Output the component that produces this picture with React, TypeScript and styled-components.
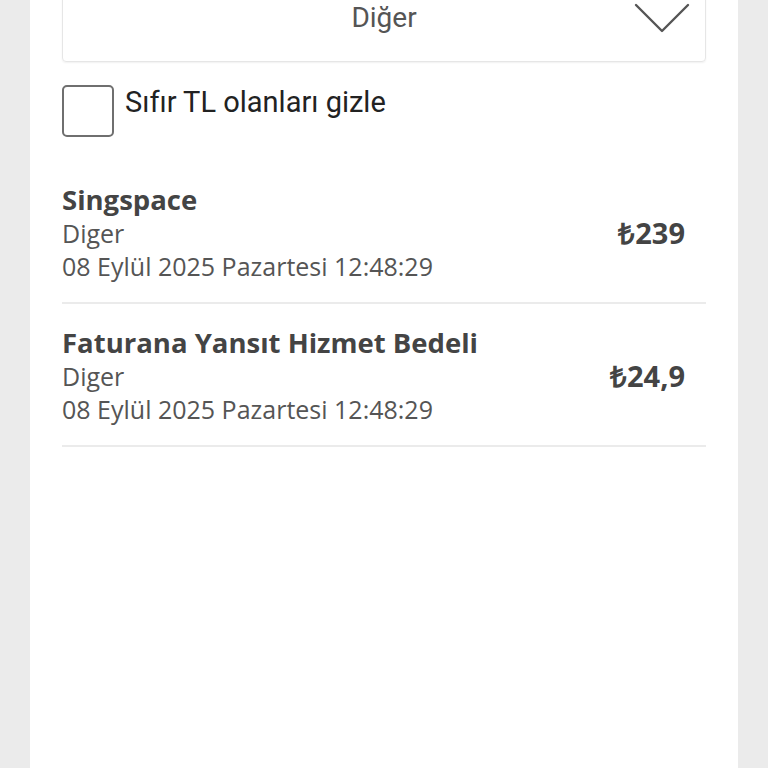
import React, { useState } from 'react';
import styled, { createGlobalStyle } from 'styled-components';

const GlobalStyle = createGlobalStyle`
  html, body {
    margin: 0;
    padding: 0;
    background: #ebebeb;
    overflow: hidden;
  }
  * { box-sizing: border-box; }
`;

type Transaction = {
  id: string;
  title: string;
  category: string;
  date: string;
  amount: string;
};

const transactions: Transaction[] = [
  {
    id: '1',
    title: 'Singspace',
    category: 'Diger',
    date: '08 Eylül 2025 Pazartesi 12:48:29',
    amount: '₺239',
  },
  {
    id: '2',
    title: 'Faturana Yansıt Hizmet Bedeli',
    category: 'Diger',
    date: '08 Eylül 2025 Pazartesi 12:48:29',
    amount: '₺24,9',
  },
];

const ChevronDown: React.FC = () => (
  <svg width="56" height="30" viewBox="0 0 56 30" fill="none">
    <path d="M2 2 L28 28 L54 2" stroke="#555" strokeWidth="2.4" strokeLinecap="round" strokeLinejoin="round" />
  </svg>
);

const App: React.FC = () => {
  const [hideZero, setHideZero] = useState(false);

  return (
    <>
      <GlobalStyle />
      <Page>
        <Panel>
          <Dropdown>
            <DropdownValue>Diğer</DropdownValue>
            <ChevronWrap>
              <ChevronDown />
            </ChevronWrap>
          </Dropdown>

          <CheckRow onClick={() => setHideZero(!hideZero)}>
            <CheckBox $checked={hideZero} />
            <CheckLabel>Sıfır TL olanları gizle</CheckLabel>
          </CheckRow>

          <List>
            {transactions.map(t => (
              <Item key={t.id}>
                <ItemInfo>
                  <ItemTitle>{t.title}</ItemTitle>
                  <ItemMeta>{t.category}</ItemMeta>
                  <ItemMeta>{t.date}</ItemMeta>
                </ItemInfo>
                <Amount>{t.amount}</Amount>
              </Item>
            ))}
          </List>
        </Panel>
      </Page>
    </>
  );
};

const Page = styled.div`
  height: 768px;
  padding: 0 30px;
  background: #ebebeb;
`;

const Panel = styled.div`
  height: 100%;
  background: #ffffff;
  padding: 0 32px;
  display: flex;
  flex-direction: column;
`;

const Dropdown = styled.div`
  position: relative;
  margin-top: -30px;
  height: 92px;
  flex-shrink: 0;
  border: 1px solid #e6e6e6;
  border-radius: 4px;
  box-shadow: 0 1px 2px rgba(0, 0, 0, 0.06);
  display: flex;
  align-items: center;
  justify-content: center;
`;

const DropdownValue = styled.span`
  font-family: Roboto, 'Liberation Sans', sans-serif;
  font-size: 28px;
  color: #555;
  margin-top: 2px;
`;

const ChevronWrap = styled.div`
  position: absolute;
  right: 15px;
  top: 32px;
  display: flex;
`;

const CheckRow = styled.div`
  display: flex;
  align-items: flex-start;
  gap: 11px;
  margin-top: 23px;
  cursor: pointer;
`;

const CheckBox = styled.div<{ $checked: boolean }>`
  width: 52px;
  height: 52px;
  border: 2px solid #6f6f6f;
  border-radius: 5px;
  background: ${({ $checked }) => ($checked ? '#e60000' : '#fff')};
  flex-shrink: 0;
`;

const CheckLabel = styled.span`
  font-family: Roboto, 'Liberation Sans', sans-serif;
  font-size: 29px;
  color: #222;
  line-height: 32px;
  margin-top: 1px;
`;

const List = styled.div`
  margin-top: 24px;
  display: flex;
  flex-direction: column;
`;

const Item = styled.div`
  display: flex;
  align-items: center;
  justify-content: space-between;
  padding: 21px 21px 19px 0;
  border-bottom: 2px solid #ebebeb;
`;

const ItemInfo = styled.div`
  display: flex;
  flex-direction: column;
`;

const ItemTitle = styled.div`
  font-family: 'Open Sans', 'Liberation Sans', sans-serif;
  font-weight: 700;
  font-size: 27.5px;
  line-height: 35px;
  color: #444;
`;

const ItemMeta = styled.div`
  font-family: 'Open Sans', 'Liberation Sans', sans-serif;
  font-size: 25px;
  line-height: 33px;
  color: #555;
`;

const Amount = styled.div`
  font-family: 'Open Sans', 'Liberation Sans', sans-serif;
  font-weight: 700;
  font-size: 29px;
  color: #444;
`;

export default App;
